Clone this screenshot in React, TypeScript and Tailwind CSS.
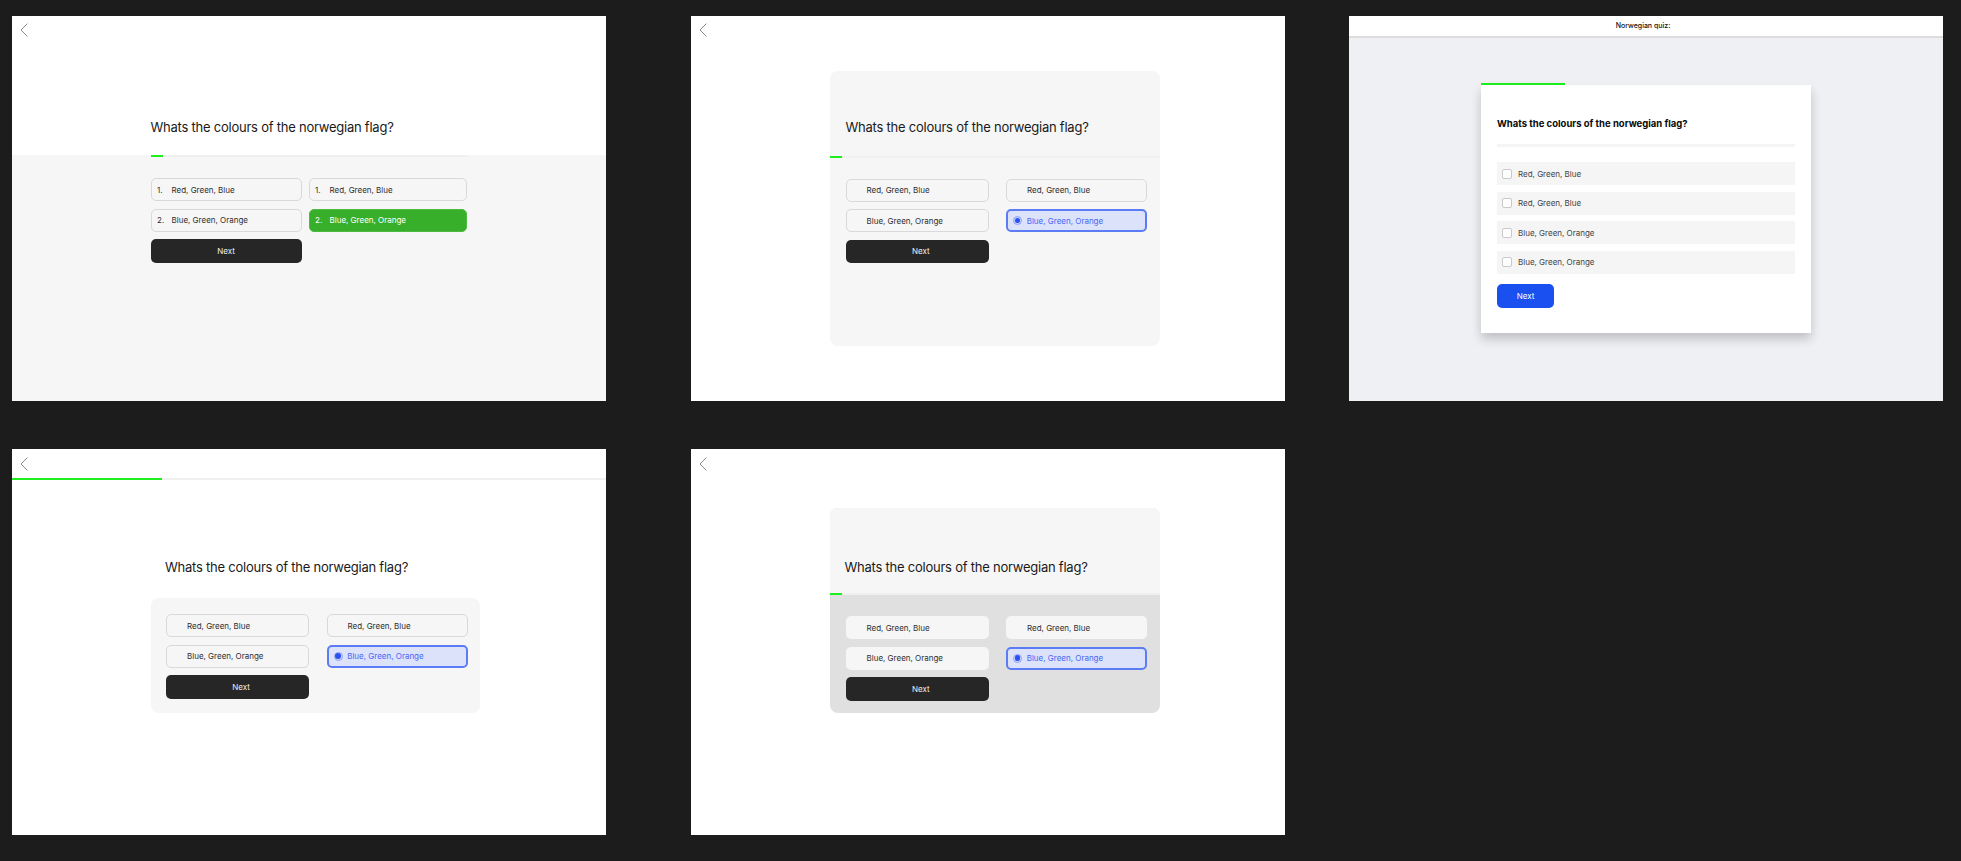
import type { ReactNode } from "react";
import { clsx } from "clsx";

type OptionVariant = "outline" | "filled" | "selected" | "correct";

function BackChevron({ className }: { className?: string }) {
  return (
    <svg
      viewBox="0 0 8 14"
      fill="none"
      className={clsx("h-[14px] w-[8px] shrink-0 stroke-[#7d7d7d]", className)}
    >
      <path d="M7.4 0.6 1 7l6.4 6.4" strokeWidth="0.9" />
    </svg>
  );
}

function Radio() {
  return (
    <span className="flex size-[9px] items-center justify-center rounded-full border border-[#8ea3f9] bg-[#c9d3fb]">
      <span className="size-[5.5px] rounded-full bg-[#2a50f2]" />
    </span>
  );
}

function Option({
  label,
  number,
  variant = "outline",
  radio,
}: {
  label: string;
  number?: string;
  variant?: OptionVariant;
  radio?: boolean;
}) {
  return (
    <div
      className={clsx(
        "flex h-[23px] items-center rounded-[5px] text-[8px]",
        variant === "outline" && "border border-[#d9d9d9] bg-[#f6f6f6] text-[#2e2e2e]",
        variant === "filled" && "bg-[#f6f6f6] text-[#2e2e2e]",
        variant === "selected" && "border-2 border-[#5b7cf5] bg-[#dde2fb] text-[#4668f5]",
        variant === "correct" && "border border-[#4cbb3f] bg-[#38af2a] text-white",
      )}
    >
      <span
        className={clsx(
          "flex shrink-0 items-center",
          variant === "selected" && "w-[18.7px] pl-[5.2px]",
          variant === "filled" && "w-[21px]",
          (variant === "outline" || variant === "correct") && "w-[20px] pl-[5.5px]",
        )}
      >
        {radio ? <Radio /> : number}
      </span>
      {label}
    </div>
  );
}

function NextButton({ shifted }: { shifted?: boolean }) {
  return (
    <div
      className={clsx(
        "flex h-[23.5px] items-center justify-center rounded-[5px] bg-[#262626] text-[8px] text-[#f0f0f0]",
        shifted && "pl-[7px]",
      )}
    >
      Next
    </div>
  );
}

function Heading({ className }: { className?: string }) {
  return (
    <h2
      className={clsx(
        "text-[13px] leading-[20px] font-normal tracking-[-0.018em] text-[#1a1a1a]",
        className,
      )}
    >
      Whats the colours of the norwegian flag?
    </h2>
  );
}

function Progress({ className, fill }: { className?: string; fill: string }) {
  return (
    <div className={clsx("h-[2px] shrink-0 bg-[#f0f0f0]", className)}>
      <div className={clsx("h-full bg-[#1ef01e]", fill)} />
    </div>
  );
}

function AnswerGrid({
  className,
  numbered,
  green,
  variant = "outline",
}: {
  className: string;
  numbered?: boolean;
  green?: boolean;
  variant?: OptionVariant;
}) {
  return (
    <div className={clsx("grid gap-y-[7.5px]", className)}>
      <Option label="Red, Green, Blue" number={numbered ? "1." : undefined} variant={variant} />
      <Option label="Red, Green, Blue" number={numbered ? "1." : undefined} variant={variant} />
      <Option label="Blue, Green, Orange" number={numbered ? "2." : undefined} variant={variant} />
      {green ? (
        <Option label="Blue, Green, Orange" number="2." variant="correct" />
      ) : (
        <Option label="Blue, Green, Orange" variant="selected" radio />
      )}
      <NextButton shifted={!numbered} />
    </div>
  );
}

function Frame({ className, children }: { className?: string; children: ReactNode }) {
  return (
    <section className={clsx("flex w-[594px] shrink-0 flex-col overflow-hidden", className)}>
      {children}
    </section>
  );
}

function SplitFrame() {
  return (
    <Frame className="h-[385px] bg-white">
      <div className="flex h-[139px] shrink-0 flex-col">
        <BackChevron className="mt-[7px] ml-[8px]" />
        <Heading className="mt-[80px] ml-[138.5px]" />
      </div>
      <div className="flex-1 bg-[#f6f6f6]">
        <Progress className="ml-[138.5px] w-[316px]" fill="w-[12px]" />
        <AnswerGrid
          className="mt-[21px] ml-[138.5px] w-[316px] grid-cols-[151px_158px] gap-x-[7px]"
          numbered
          green
        />
      </div>
    </Frame>
  );
}

function CardFrame() {
  return (
    <Frame className="ml-[85px] h-[385px] bg-white">
      <BackChevron className="mt-[7px] ml-[8px]" />
      <div className="mt-[34px] ml-[138.5px] h-[275px] w-[330px] overflow-hidden rounded-[8px] bg-[#f6f6f6]">
        <Heading className="mt-[46px] ml-[16px]" />
        <Progress className="mt-[18.5px]" fill="w-[12px]" />
        <AnswerGrid className="mt-[21px] ml-[16px] grid-cols-[143.5px_141px] gap-x-[17px]" />
      </div>
    </Frame>
  );
}

function QuizRow({ label }: { label: string }) {
  return (
    <div className="flex h-[23px] items-center bg-[#f5f5f6] text-[8px] text-[#444444]">
      <span className="mr-[6px] ml-[5px] size-[10px] rounded-[2px] border border-[#c9c9c9] bg-white" />
      {label}
    </div>
  );
}

function WhiteCardFrame() {
  return (
    <Frame className="ml-[64px] h-[385px] bg-[#eef0f4]">
      <header className="flex h-[22px] shrink-0 items-center justify-center border-b-2 border-[#dcdcdc] bg-white pr-[6px] text-[7px] font-medium text-[#111111]">
        Norwegian quiz:
      </header>
      <div className="mt-[45px] ml-[132px] w-[330px]">
        <Progress className="bg-[#f1f2f4]" fill="w-[84px]" />
        <div className="h-[248px] bg-white px-[16px] pt-[29px] shadow-[0_6px_10px_rgba(0,0,0,0.2)]">
          <h2 className="text-[9.5px] leading-[20px] font-bold text-[#0a0a0a]">
            Whats the colours of the norwegian flag?
          </h2>
          <div className="mt-[10px] h-[3px] bg-[#f4f5f7]" />
          <div className="mt-[15px] flex flex-col gap-[6.5px]">
            <QuizRow label="Red, Green, Blue" />
            <QuizRow label="Red, Green, Blue" />
            <QuizRow label="Blue, Green, Orange" />
            <QuizRow label="Blue, Green, Orange" />
          </div>
          <div className="mt-[10.5px] flex h-[23.5px] w-[57px] items-center justify-center rounded-[5px] bg-[#1a50f0] text-[8px] text-white">
            Next
          </div>
        </div>
      </div>
    </Frame>
  );
}

function TopBarFrame() {
  return (
    <Frame className="h-[386px] bg-white">
      <div className="h-[29px] shrink-0">
        <BackChevron className="mt-[8px] ml-[8px]" />
      </div>
      <Progress className="w-full" fill="w-[150px]" />
      <Heading className="mt-[77px] ml-[153px]" />
      <div className="mt-[21px] ml-[139px] h-[115px] w-[329px] rounded-[8px] bg-[#f6f6f6] pt-[16px] pl-[15px]">
        <AnswerGrid className="grid-cols-[143px_141px] gap-x-[17.5px]" />
      </div>
    </Frame>
  );
}

function GreyCardFrame() {
  return (
    <Frame className="ml-[85px] h-[386px] bg-white">
      <BackChevron className="mt-[8px] ml-[8px]" />
      <div className="mt-[37px] ml-[138.5px] h-[205px] w-[330px] overflow-hidden rounded-[8px] bg-[#e0e0e0]">
        <div className="h-[85px] bg-[#f6f6f6] pt-[49px]">
          <Heading className="ml-[15px]" />
        </div>
        <Progress fill="w-[12px]" />
        <AnswerGrid
          className="mt-[21px] ml-[16px] grid-cols-[143.5px_141px] gap-x-[17px]"
          variant="filled"
        />
      </div>
    </Frame>
  );
}

export default function App() {
  return (
    <div className="flex h-[861px] w-[1961px] flex-col gap-[48px] overflow-hidden bg-[#1c1c1c] pt-[16px] pl-[12px] font-['Inter',sans-serif]">
      <div className="flex">
        <SplitFrame />
        <CardFrame />
        <WhiteCardFrame />
      </div>
      <div className="flex">
        <TopBarFrame />
        <GreyCardFrame />
      </div>
    </div>
  );
}
